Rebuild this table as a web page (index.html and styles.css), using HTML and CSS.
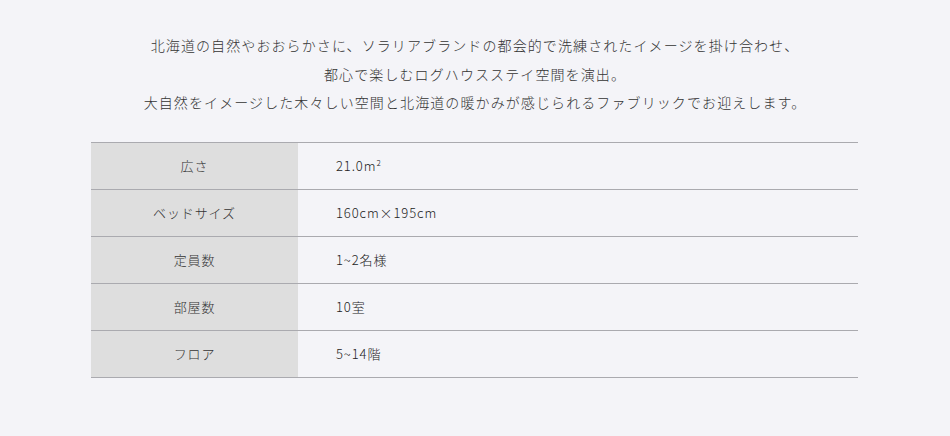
FILE: index.html
```html
<!DOCTYPE html>
<html lang="ja">
<head>
<meta charset="utf-8">
<link rel="stylesheet" href="styles.css">
</head>
<body>
<div class="page">
  <div class="intro">
    <p>北海道の自然やおおらかさに、ソラリアブランドの都会的で洗練されたイメージを掛け合わせ、</p>
    <p>都心で楽しむログハウスステイ空間を演出。</p>
    <p>大自然をイメージした木々しい空間と北海道の暖かみが感じられるファブリックでお迎えします。</p>
  </div>
  <table class="spec">
    <tr><th>広さ</th><td>21.0m<sup>2</sup></td></tr>
    <tr><th>ベッドサイズ</th><td>160cm×195cm</td></tr>
    <tr><th>定員数</th><td>1~2名様</td></tr>
    <tr><th>部屋数</th><td>10室</td></tr>
    <tr><th>フロア</th><td>5~14階</td></tr>
  </table>
</div>
</body>
</html>
```

FILE: styles.css
```css
html, body {
  margin: 0;
  padding: 0;
  background: #f4f4f8;
}
body {
  font-family: "Noto Sans CJK JP", "Noto Sans", sans-serif;
  color: #444;
}
.page {
  width: 950px;
  padding-top: 31px;
}
.intro {
  text-align: center;
  font-size: 14px;
  line-height: 28.5px;
  letter-spacing: 1.1px;
  color: #333;
  font-weight: 300;
}
.intro p {
  margin: 0;
}
.spec {
  margin: 25px 0 0 91px;
  width: 767px;
  border-collapse: collapse;
  font-size: 13px;
  letter-spacing: 0.9px;
  font-weight: 300;
}
.spec tr {
  border-top: 1px solid #aaaaaf;
  border-bottom: 1px solid #aaaaaf;
}
.spec th {
  width: 207px;
  background: #dedede;
  font-weight: 300;
  text-align: center;
  height: 46px;
  padding: 0;
  color: #333;
}
.spec td {
  padding: 0 0 0 38px;
  height: 46px;
  color: #222;
}
.spec sup {
  font-size: 8px;
  vertical-align: 5px;
  line-height: 0;
}
```
